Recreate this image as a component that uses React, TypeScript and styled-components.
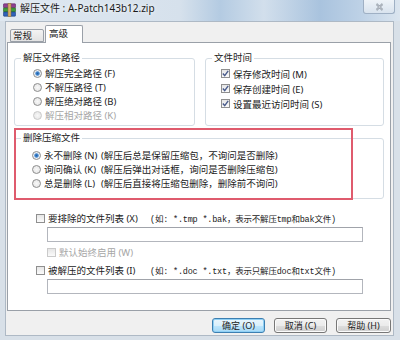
import React from "react";
import styled, { createGlobalStyle } from "styled-components";

const GlobalStyle = createGlobalStyle`
  html, body {
    margin: 0;
    padding: 0;
  }
  body {
    width: 400px;
    height: 340px;
    overflow: hidden;
    font-family: "Noto Sans", "Noto Sans CJK SC", sans-serif;
    color: #222;
  }
`;

const Window = styled.div`
  width: 400px;
  height: 340px;
  display: flex;
  flex-direction: column;
  background: #d8e0e8;
  box-sizing: border-box;
`;

const TitleBar = styled.div`
  height: 21px;
  flex-shrink: 0;
  display: flex;
  align-items: flex-start;
  padding-left: 3px;
  background: linear-gradient(
    90deg,
    #dfe8f1 0%,
    #d6e1ec 45%,
    #b4cbe2 55%,
    #d2dfec 66%,
    #a9c3de 80%,
    #bdd1e6 90%,
    #dbe5ef 100%
  );
`;

const AppIcon = styled.svg`
  width: 13px;
  height: 14px;
  margin-top: 3px;
  flex-shrink: 0;
`;

const Title = styled.div`
  margin-left: 4px;
  margin-top: 2px;
  font-size: 10px;
  line-height: 13px;
  color: #1a1a1a;
  text-shadow: 0 0 4px #fff;
  white-space: nowrap;
`;

const CloseButton = styled.div`
  margin-left: auto;
  margin-right: 5px;
  width: 32px;
  height: 14px;
  box-sizing: border-box;
  border: 1px solid #9fb0c4;
  border-top: none;
  border-radius: 0 0 3px 3px;
  background: linear-gradient(#eef3f8, #d9e3ee);
  display: flex;
  align-items: center;
  justify-content: center;
`;

const Frame = styled.div`
  flex: 1;
  display: flex;
  padding: 0 6px 4px 5px;
  min-height: 0;
`;

const Client = styled.div`
  flex: 1;
  display: flex;
  flex-direction: column;
  background: #f0f0f0;
  border: 1px solid #aeb9c5;
  padding: 3px 2px 0 1px;
`;

const TabRow = styled.div`
  display: flex;
  align-items: flex-end;
  padding-left: 3px;
  height: 17px;
  position: relative;
  z-index: 1;
`;

const Tab = styled.div<{ $active?: boolean }>`
  box-sizing: border-box;
  height: ${(p) => (p.$active ? "18px" : "13px")};
  width: ${(p) => (p.$active ? "38px" : "34px")};
  margin-bottom: ${(p) => (p.$active ? "-1px" : "0")};
  margin-left: ${(p) => (p.$active ? "1px" : "0")};
  border: 1px solid #9aa0a8;
  border-bottom: ${(p) => (p.$active ? "none" : "1px solid #9aa0a8")};
  border-radius: 2px 2px 0 0;
  background: ${(p) =>
    p.$active ? "#fff" : "linear-gradient(#f3f3f3, #e3e3e3)"};
  font-size: 9.5px;
  line-height: 11px;
  padding: ${(p) => (p.$active ? "2px 0 0 3px" : "0 0 0 2px")};
`;

const Panel = styled.div`
  height: 269px;
  box-sizing: border-box;
  background: #fff;
  border: 1px solid #9aa0a8;
  padding: 0 6px;
  display: flex;
  flex-direction: column;
`;

const TopRow = styled.div`
  display: grid;
  grid-template-columns: 181px 1fr;
  column-gap: 10px;
  margin-top: 9px;
`;

const Group = styled.fieldset<{ $bottom?: number }>`
  margin: 0;
  padding: 0 0 ${(p) => p.$bottom ?? 3}px 0;
  border: 1px solid #d5dde4;
  border-radius: 3px;
  min-width: 0;
`;

const Legend = styled.legend`
  margin-left: 6px;
  padding: 0 2px;
  font-size: 9.5px;
  line-height: 12px;
`;

const OptionList = styled.div<{ $indent: number; $top: number }>`
  display: flex;
  flex-direction: column;
  padding-left: ${(p) => p.$indent}px;
  padding-top: ${(p) => p.$top}px;
`;

const Option = styled.div<{ $h?: number; $disabled?: boolean }>`
  display: flex;
  align-items: center;
  gap: 3px;
  height: ${(p) => p.$h ?? 14}px;
  font-size: 9.5px;
  white-space: nowrap;
  color: ${(p) => (p.$disabled ? "#a6a6a6" : "#222")};
`;

const Radio = styled.span<{ $checked?: boolean; $disabled?: boolean }>`
  width: 9px;
  height: 9px;
  flex-shrink: 0;
  box-sizing: border-box;
  border-radius: 50%;
  border: 1px solid ${(p) => (p.$disabled ? "#c9c9c9" : "#8d8d8d")};
  background: ${(p) =>
    p.$checked
      ? "radial-gradient(circle, #1d5ea6 0, #4c8ed4 1.8px, #e9eef3 2.6px, #fafafa 100%)"
      : "radial-gradient(circle, #f8f8f8 0, #e2e2e2 100%)"};
`;

const Check = styled.span<{ $disabled?: boolean }>`
  width: 9px;
  height: 9px;
  flex-shrink: 0;
  box-sizing: border-box;
  border: 1px solid ${(p) => (p.$disabled ? "#cacaca" : "#8f8f8f")};
  background: linear-gradient(#e6e6e6, #fbfbfb);
  display: flex;
  align-items: center;
  justify-content: center;
`;

const Mnemonic = styled.span<{ $w?: number }>`
  min-width: ${(p) => p.$w ?? 0}px;
`;

const Hint = styled.span`
  font-family: "Liberation Mono", "Noto Sans CJK SC", monospace;
  font-size: 8.5px;
  letter-spacing: -0.2px;
`;

const DeleteArea = styled.div`
  position: relative;
  margin-top: 6px;
`;

const Annotation = styled.div`
  position: absolute;
  top: -4px;
  left: 0;
  bottom: -1px;
  width: 339px;
  box-sizing: border-box;
  border: 2px solid #df5b6d;
  pointer-events: none;
`;

const FileSection = styled.div`
  display: flex;
  flex-direction: column;
  padding-left: 22px;
  margin-top: 12px;
`;

const TextBox = styled.div<{ $gap: number }>`
  width: 316px;
  height: 15px;
  box-sizing: border-box;
  margin: ${(p) => p.$gap}px 0 0 11px;
  border: 1px solid #b3b6bd;
  border-top-color: #a0a3aa;
  background: #fff;
`;

const SubOption = styled.div<{ $top: number; $indent?: number }>`
  margin-top: ${(p) => p.$top}px;
  padding-left: ${(p) => p.$indent ?? 0}px;
`;

const ButtonRow = styled.div`
  display: flex;
  justify-content: flex-end;
  gap: 9px;
  margin-top: 7px;
`;

const Button = styled.div<{ $primary?: boolean; $w: number }>`
  width: ${(p) => p.$w}px;
  height: 15px;
  box-sizing: border-box;
  border: 1px solid ${(p) => (p.$primary ? "#3c7fb1" : "#777")};
  border-radius: 3px;
  background: ${(p) =>
    p.$primary
      ? "linear-gradient(#eaf6fd 0%, #d9f0fc 50%, #bee6fd 51%, #a7d9f5 100%)"
      : "linear-gradient(#f2f2f2 0%, #ebebeb 50%, #dddddd 51%, #cfcfcf 100%)"};
  box-shadow: inset 0 0 0 1px ${(p) => (p.$primary ? "#8fd0f5" : "#fbfbfb")};
  font-size: 9px;
  line-height: 13px;
  text-align: center;
  color: #222;
`;

const CheckMark = () => (
  <svg width="7" height="7" viewBox="0 0 7 7">
    <path d="M0.8 3.6 L2.7 5.6 L6.2 0.9" fill="none" stroke="#4a5c8c" strokeWidth="1.4" />
  </svg>
);

const WinRarIcon = () => (
  <AppIcon viewBox="0 0 13 14">
    <rect x="0.5" y="0.8" width="12" height="4" rx="0.6" fill="#8e3f92" stroke="#5a2260" strokeWidth="0.6" />
    <rect x="0.5" y="4.9" width="12" height="4" rx="0.6" fill="#3f9c3b" stroke="#24621f" strokeWidth="0.6" />
    <rect x="0.5" y="9" width="12" height="4.2" rx="0.6" fill="#2f62b9" stroke="#1c3c7a" strokeWidth="0.6" />
    <rect x="5" y="0.3" width="3" height="13.4" fill="#d4ad6a" stroke="#8a6a34" strokeWidth="0.5" />
  </AppIcon>
);

type Choice = { label: string; checked?: boolean; disabled?: boolean; note?: string };

const pathChoices: Choice[] = [
  { label: "解压完全路径 (F)", checked: true },
  { label: "不解压路径 (T)" },
  { label: "解压绝对路径 (B)" },
  { label: "解压相对路径 (K)", disabled: true },
];

const timeChoices: Choice[] = [
  { label: "保存修改时间 (M)" },
  { label: "保存创建时间 (E)" },
  { label: "设置最近访问时间 (S)" },
];

const deleteChoices: Choice[] = [
  { label: "永不删除 (N)", checked: true, note: "(解压后总是保留压缩包，不询问是否删除)" },
  { label: "询问确认 (K)", note: "(解压后弹出对话框，询问是否删除压缩包)" },
  { label: "总是删除 (L)", note: "(解压后直接将压缩包删除，删除前不询问)" },
];

export default function App() {
  return (
    <>
      <GlobalStyle />
      <Window>
        <TitleBar>
          <WinRarIcon />
          <Title>解压文件 : A-Patch143b12.zip</Title>
          <CloseButton>
            <svg width="9" height="8" viewBox="0 0 9 8">
              <path d="M1.5 1 L7.5 7 M7.5 1 L1.5 7" stroke="#7d8794" strokeWidth="1.8" />
              <path d="M1.5 1 L7.5 7 M7.5 1 L1.5 7" stroke="#f4f6f8" strokeWidth="0.8" />
            </svg>
          </CloseButton>
        </TitleBar>
        <Frame>
          <Client>
            <TabRow>
              <Tab>常规</Tab>
              <Tab $active>高级</Tab>
            </TabRow>
            <Panel>
              <TopRow>
                <Group>
                  <Legend>解压文件路径</Legend>
                  <OptionList $indent={18} $top={2}>
                    {pathChoices.map((c) => (
                      <Option key={c.label} $disabled={c.disabled}>
                        <Radio $checked={c.checked} $disabled={c.disabled} />
                        {c.label}
                      </Option>
                    ))}
                  </OptionList>
                </Group>
                <Group>
                  <Legend>文件时间</Legend>
                  <OptionList $indent={15} $top={2}>
                    {timeChoices.map((c) => (
                      <Option key={c.label} $h={15}>
                        <Check>
                          <CheckMark />
                        </Check>
                        {c.label}
                      </Option>
                    ))}
                  </OptionList>
                </Group>
              </TopRow>

              <DeleteArea>
                <Group $bottom={8}>
                  <Legend>删除压缩文件</Legend>
                  <OptionList $indent={17} $top={4}>
                    {deleteChoices.map((c) => (
                      <Option key={c.label}>
                        <Radio $checked={c.checked} />
                        <Mnemonic $w={54}>{c.label}</Mnemonic>
                        {c.note}
                      </Option>
                    ))}
                  </OptionList>
                </Group>
                <Annotation />
              </DeleteArea>

              <FileSection>
                <Option>
                  <Check />
                  <Mnemonic $w={99}>要排除的文件列表 (X)</Mnemonic>
                  <Hint>(如: *.tmp *.bak，表示不解压tmp和bak文件)</Hint>
                </Option>
                <TextBox $gap={2} />
                <SubOption $top={3} $indent={11}>
                  <Option $disabled>
                    <Check $disabled />
                    默认始终启用 (W)
                  </Option>
                </SubOption>
                <SubOption $top={4}>
                  <Option>
                    <Check />
                    <Mnemonic $w={99}>被解压的文件列表 (I)</Mnemonic>
                    <Hint>(如: *.doc *.txt，表示只解压doc和txt文件)</Hint>
                  </Option>
                </SubOption>
                <TextBox $gap={2} />
              </FileSection>
            </Panel>
            <ButtonRow>
              <Button $primary $w={53}>确定 (O)</Button>
              <Button $w={53}>取消 (C)</Button>
              <Button $w={55}>帮助 (H)</Button>
            </ButtonRow>
          </Client>
        </Frame>
      </Window>
    </>
  );
}
